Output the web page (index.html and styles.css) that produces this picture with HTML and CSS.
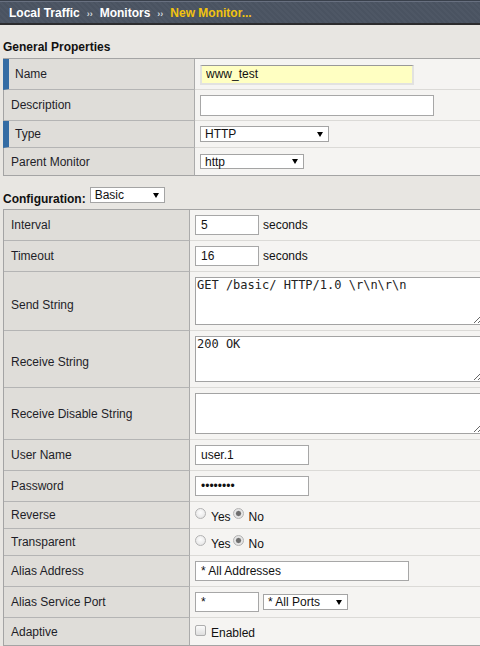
FILE: index.html
```html
<!DOCTYPE html>
<html lang="en">
<head>
<meta charset="utf-8">
<title>New Monitor</title>
<link rel="stylesheet" href="styles.css">
</head>
<body>
<div class="topbar">
  <span class="crumb">Local Traffic</span><span class="sep">&rsaquo;&rsaquo;</span><span class="crumb">Monitors</span><span class="sep">&rsaquo;&rsaquo;</span><span class="crumb current">New Monitor...</span>
</div>

<h2 class="section">General Properties</h2>
<div class="form general">
  <div class="row h31">
    <div class="lbl req">Name</div>
    <div class="val"><input class="txt name" type="text" value="www_test"></div>
  </div>
  <div class="row h31">
    <div class="lbl">Description</div>
    <div class="val"><input class="txt desc" type="text" value=""></div>
  </div>
  <div class="row h27">
    <div class="lbl req">Type</div>
    <div class="val"><div class="sel w129"><span>HTTP</span><svg class="arr" width="6" height="5" viewBox="0 0 6 5"><polygon points="0,0 6,0 3,5" fill="#000"/></svg></div></div>
  </div>
  <div class="row h28">
    <div class="lbl">Parent Monitor</div>
    <div class="val"><div class="sel w104"><span>http</span><svg class="arr" width="6" height="5" viewBox="0 0 6 5"><polygon points="0,0 6,0 3,5" fill="#000"/></svg></div></div>
  </div>
</div>

<div class="config">
  <span class="config-label">Configuration:</span>
  <div class="sel w75"><span>Basic</span><svg class="arr" width="6" height="5" viewBox="0 0 6 5"><polygon points="0,0 6,0 3,5" fill="#000"/></svg></div>
</div>

<div class="form settings">
  <div class="row h31">
    <div class="lbl">Interval</div>
    <div class="val"><input class="txt w64" type="text" value="5"><span>seconds</span></div>
  </div>
  <div class="row h31">
    <div class="lbl">Timeout</div>
    <div class="val"><input class="txt w64" type="text" value="16"><span>seconds</span></div>
  </div>
  <div class="row">
    <div class="lbl shift4">Send String</div>
    <div class="val area"><textarea class="ta ta-send">GET /basic/ HTTP/1.0 \r\n\r\n</textarea></div>
  </div>
  <div class="row">
    <div class="lbl shift3">Receive String</div>
    <div class="val area"><textarea class="ta ta-recv">200 OK</textarea></div>
  </div>
  <div class="row">
    <div class="lbl">Receive Disable String</div>
    <div class="val area"><textarea class="ta ta-dis"></textarea></div>
  </div>
  <div class="row h31">
    <div class="lbl">User Name</div>
    <div class="val"><input class="txt w114" type="text" value="user.1"></div>
  </div>
  <div class="row h31">
    <div class="lbl">Password</div>
    <div class="val"><input class="txt w114" type="password" value="secret12"></div>
  </div>
  <div class="row h27">
    <div class="lbl">Reverse</div>
    <div class="val choice"><input class="radio" type="radio" name="rev"><span class="opt">Yes</span><input class="radio" type="radio" name="rev" checked><span class="opt">No</span></div>
  </div>
  <div class="row h27">
    <div class="lbl">Transparent</div>
    <div class="val choice"><input class="radio" type="radio" name="tr"><span class="opt">Yes</span><input class="radio" type="radio" name="tr" checked><span class="opt">No</span></div>
  </div>
  <div class="row h31">
    <div class="lbl">Alias Address</div>
    <div class="val"><input class="txt w214" type="text" value="* All Addresses"></div>
  </div>
  <div class="row h31">
    <div class="lbl">Alias Service Port</div>
    <div class="val"><input class="txt w64" type="text" value="*"><div class="sel w85"><span>* All Ports</span><svg class="arr" width="6" height="5" viewBox="0 0 6 5"><polygon points="0,0 6,0 3,5" fill="#000"/></svg></div></div>
  </div>
  <div class="row h28">
    <div class="lbl">Adaptive</div>
    <div class="val choice"><input class="check" type="checkbox"><span class="opt">Enabled</span></div>
  </div>
</div>
</body>
</html>
```
FILE: styles.css
```css
html, body {
  margin: 0;
  padding: 0;
}
body {
  width: 480px;
  height: 646px;
  overflow: hidden;
  background: #e8e6e2;
  font-family: "Liberation Sans", Arial, sans-serif;
  font-size: 12px;
  color: #222;
}

.topbar {
  box-sizing: border-box;
  height: 25px;
  padding: 3px 0 0 9px;
  line-height: 20px;
  display: flex;
  align-items: baseline;
  white-space: nowrap;
  color: #fff;
  font-weight: bold;
  border-bottom: 2px solid #2c2c2e;
  background: repeating-linear-gradient(45deg, #4a5361 0 2px, #4e5765 2px 4px);
  box-shadow: inset 0 1px #39404b, inset 0 2px #687080;
}
.topbar .sep {
  font-size: 9px;
  margin: 0 7px;
  color: #d3d7de;
}
.topbar .current {
  color: #f2c310;
}

.section {
  margin: 0;
  padding: 15px 3px 3px;
  font-size: 12px;
  line-height: 15px;
  font-weight: bold;
  color: #111;
}

.form {
  margin-left: 3px;
  border-top: 1px solid #a4a4a4;
  border-left: 1px solid #a4a4a4;
}
.form .row {
  display: grid;
  grid-template-columns: 191px 1fr;
}
.form.settings .row {
  grid-template-columns: 186px 1fr;
}
.row.h31 { height: 31px; }
.row.h27 { height: 27px; }
.row.h28 { height: 28px; }

.lbl {
  box-sizing: border-box;
  display: flex;
  align-items: center;
  padding-left: 7px;
  background: #dfddd9;
  border-right: 1px solid #ababab;
  border-bottom: 1px solid #b4b4b4;
  color: #1e1e28;
  white-space: nowrap;
}
.lbl.req {
  margin-left: -1px;
  border-left: 6px solid #346ca4;
  padding-left: 6px;
}
.lbl.shift4 { padding-top: 8px; }
.lbl.shift3 { padding-top: 6px; }

.val {
  box-sizing: border-box;
  display: flex;
  align-items: center;
  gap: 4px;
  padding-left: 5px;
  background: #f5f4f2;
  border-bottom: 1px solid #dbdad7;
  white-space: nowrap;
  color: #111;
}
.val.area {
  padding: 5px 0 5px 5px;
  align-items: flex-start;
}
.row:last-child > div {
  border-bottom-color: #a4a4a4;
}

.txt {
  box-sizing: border-box;
  height: 20px;
  margin: 0;
  padding: 0 5px;
  border: 1px solid #a7a7a7;
  border-radius: 0;
  background: #fff;
  font-family: "Liberation Sans", Arial, sans-serif;
  font-size: 12px;
  color: #111;
  outline: none;
}
.txt.name {
  width: 214px;
  height: 20px;
  margin-top: 1px;
  padding-left: 4px;
  background: #ffffc2;
  border: 2px solid #e2e2e0;
  border-top: 1px solid #999;
}
.txt.desc {
  width: 234px;
  height: 21px;
  margin-top: 1px;
}
.w64 { width: 64px; }
.w114 { width: 114px; }
.w214 { width: 214px; }

.sel {
  box-sizing: border-box;
  height: 16px;
  display: flex;
  align-items: center;
  justify-content: space-between;
  padding: 0 5px 0 4px;
  border: 1px solid #a4a4a4;
  background: #fff;
  line-height: 14px;
  color: #111;
}
.sel span {
  align-self: flex-start;
}
.sel .arr {
  flex: none;
}
.w129 { width: 129px; }
.w104 { width: 104px; height: 15px; }
.w75 { width: 75px; }
.w85 { width: 85px; }

.config {
  display: flex;
  align-items: flex-start;
  gap: 4px;
  padding: 11px 3px 2px;
}
.config-label {
  margin-top: 5px;
  line-height: 15px;
  font-weight: bold;
  color: #111;
}

.ta {
  display: block;
  box-sizing: border-box;
  width: 288px;
  margin: 0;
  padding: 0 1px;
  border: 1px solid #a3a3a3;
  border-radius: 0;
  background: #fff;
  font-family: "DejaVu Sans Mono", monospace;
  font-size: 12px;
  color: #222;
  resize: both;
  outline: none;
}
.ta-send { height: 48px; }
.ta-recv { height: 46px; }
.ta-dis { height: 41px; }

.choice {
  gap: 0;
}
.choice .opt {
  margin-top: 3px;
}
.radio {
  appearance: none;
  -webkit-appearance: none;
  box-sizing: border-box;
  width: 11px;
  height: 11px;
  margin: 0 5px 4px 0;
  border: 1px solid #b3b3b3;
  border-radius: 50%;
  background: radial-gradient(circle at 50% 40%, #fdfdfd 0, #ececec 60%, #d8d8d8 100%);
}
.radio:checked {
  background: radial-gradient(circle, #6e6e6e 0 2px, #a8a8a8 2.6px, #e9e9e9 3.2px, #d8d8d8 100%);
}
.opt + .radio {
  margin-left: 2px;
}
.check {
  appearance: none;
  -webkit-appearance: none;
  box-sizing: border-box;
  width: 11px;
  height: 11px;
  margin: 0 5px 3px 0;
  border: 1px solid #aeaeae;
  border-radius: 2px;
  background: linear-gradient(#fbfbfb, #dedede);
}
```
